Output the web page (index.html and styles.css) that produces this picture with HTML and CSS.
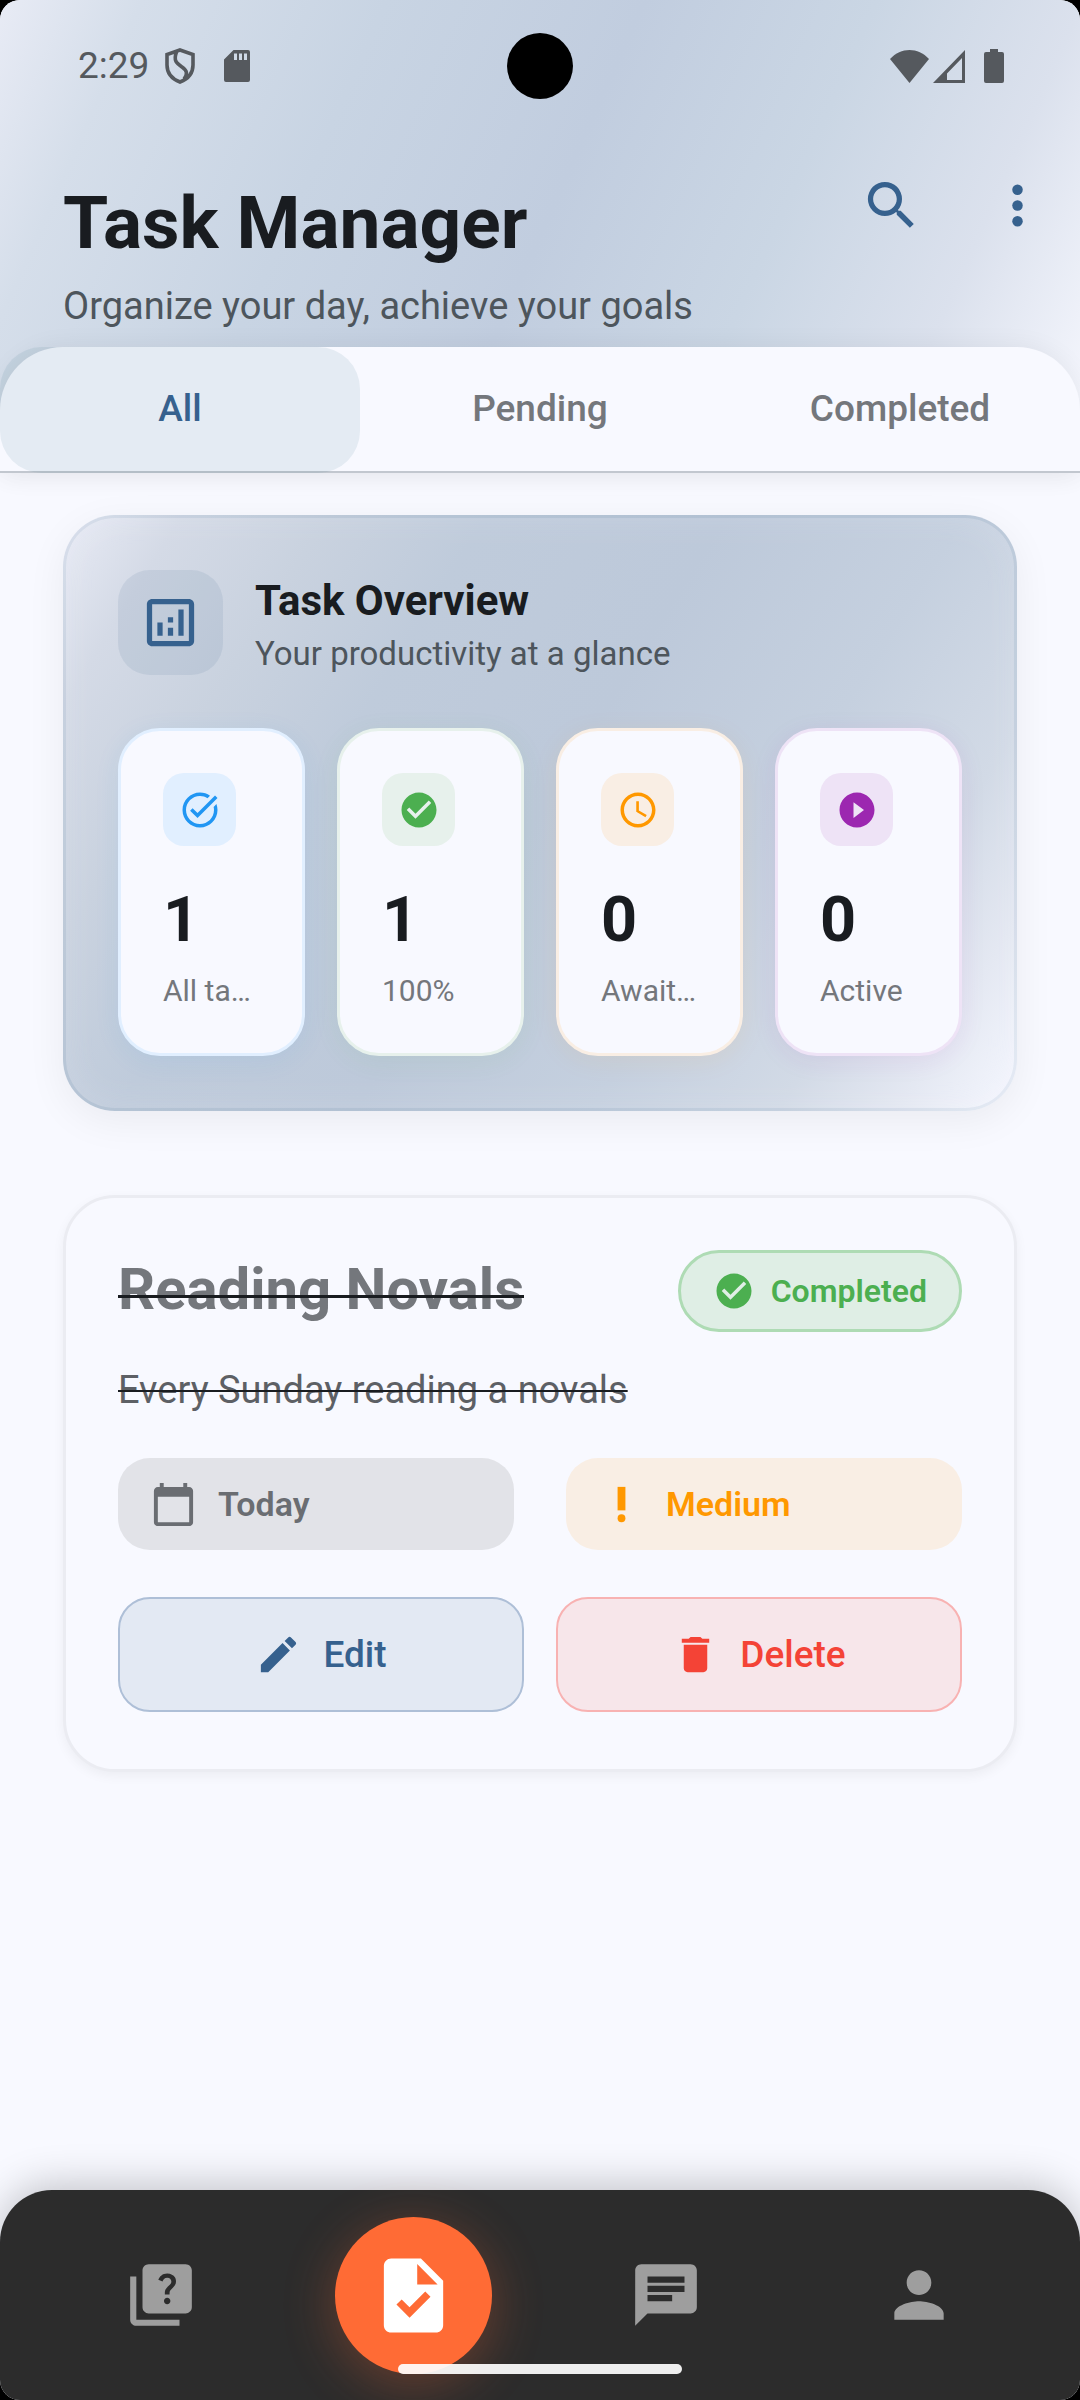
FILE: index.html
```html
<!DOCTYPE html>
<html lang="en">
<head>
<meta charset="utf-8">
<meta name="viewport" content="width=device-width, initial-scale=1">
<title>Task Manager</title>
<link rel="stylesheet" href="styles.css">
</head>
<body>
<div class="app">
  <header class="header">
    <div class="status">
      <div class="status-group">
        <span class="status-time">2:29</span>
        <svg class="status-icon shield" viewBox="0 0 30 36" aria-hidden="true"><path d="M15 2 28 6.500V17C28 25 23 31 15 34 7 31 2 25 2 17V6.500Z M11.500 4C8 13 12 15.500 17 19S23 26 19 31" fill="none" stroke="currentColor" stroke-width="3.600"/></svg>
        <svg class="status-icon sd" viewBox="0 0 26 32" aria-hidden="true"><path fill-rule="evenodd" d="M9.500 0H24a2 2 0 0 1 2 2V30a2 2 0 0 1-2 2H2a2 2 0 0 1-2-2V9.500ZM10 3.500V10h3V3.500ZM15 3.500V10h3V3.500ZM20 3.500V10h3V3.500Z"/></svg>
      </div>
      <span class="camera"></span>
      <div class="status-group">
        <svg class="status-icon wifi" viewBox="0 0 39 33" aria-hidden="true"><path d="M0 9C11-3 28-3 39 9L19.500 33Z"/></svg>
        <svg class="status-icon signal" viewBox="0 0 32 33" aria-hidden="true"><path fill-rule="evenodd" d="M32 0V33H0ZM29 8 14 23.500V30H29Z"/></svg>
        <svg class="status-icon battery" viewBox="0 0 20 34" aria-hidden="true"><path d="M6 0h8v3h4a2 2 0 0 1 2 2V32a2 2 0 0 1-2 2H2a2 2 0 0 1-2-2V5a2 2 0 0 1 2-2h4Z"/></svg>
      </div>
    </div>
    <div class="toolbar">
      <div class="heading">
        <h1 class="title">Task Manager</h1>
        <p class="subtitle">Organize your day, achieve your goals</p>
      </div>
      <div class="actions">
        <button class="icon-button" type="button" aria-label="Search"><svg class="icon-large" viewBox="0 0 24 24"><path d="M15.500 14h-.79l-.28-.27A6.471 6.471 0 0 0 16 9.500 6.500 6.500 0 1 0 9.500 16c1.610 0 3.090-.59 4.230-1.570l.27.28v.79l5 4.990L20.490 19l-4.990-5zm-6 0C7.010 14 5 11.990 5 9.500S7.010 5 9.500 5 14 7.010 14 9.500 11.990 14 9.500 14z"/></svg></button>
        <button class="icon-button" type="button" aria-label="More options"><svg class="icon-large" viewBox="0 0 24 24"><circle cx="12" cy="6" r="2"/><circle cx="12" cy="12" r="2"/><circle cx="12" cy="18" r="2"/></svg></button>
      </div>
    </div>
    <div class="tabs" role="tablist">
      <button class="tab tab-active" type="button" role="tab" aria-selected="true">All</button>
      <button class="tab" type="button" role="tab" aria-selected="false">Pending</button>
      <button class="tab" type="button" role="tab" aria-selected="false">Completed</button>
    </div>
  </header>

  <main class="content">
    <section class="overview">
      <div class="overview-head">
        <span class="overview-icon"><svg class="icon-large" viewBox="0 0 24 24" aria-hidden="true"><path d="M19 3H5c-1.100 0-2 .9-2 2v14c0 1.100.9 2 2 2h14c1.100 0 2-.9 2-2V5c0-1.100-.9-2-2-2zm0 16H5V5h14v14zM7 12h2v5H7zM15 7h2v10h-2zM11 14h2v3h-2zM11 10h2v2h-2z"/></svg></span>
        <div class="overview-text">
          <h2 class="overview-title">Task Overview</h2>
          <p class="overview-subtitle">Your productivity at a glance</p>
        </div>
      </div>
      <div class="stats">
        <div class="stat stat-blue">
          <span class="stat-icon"><svg class="icon-small" viewBox="0 0 24 24" aria-hidden="true"><path d="M22 5.180 10.590 16.600l-4.240-4.240 1.410-1.410 2.830 2.830 10-10L22 5.180zM19.790 10.220c.13.570.21 1.170.21 1.780 0 4.420-3.580 8-8 8s-8-3.580-8-8 3.580-8 8-8c1.580 0 3.040.46 4.280 1.250l1.440-1.440C16.100 2.670 14.130 2 12 2 6.480 2 2 6.480 2 12s4.480 10 10 10 10-4.480 10-10c0-1.190-.22-2.330-.6-3.390l-1.610 1.610z"/></svg></span>
          <strong class="stat-value">1</strong>
          <span class="stat-label">All ta…</span>
        </div>
        <div class="stat stat-green">
          <span class="stat-icon"><svg class="icon-small" viewBox="0 0 24 24" aria-hidden="true"><path d="M12 2C6.480 2 2 6.480 2 12s4.480 10 10 10 10-4.480 10-10S17.520 2 12 2zm-2 15-5-5 1.410-1.410L10 14.170l7.590-7.590L19 8l-9 9z"/></svg></span>
          <strong class="stat-value">1</strong>
          <span class="stat-label">100%</span>
        </div>
        <div class="stat stat-orange">
          <span class="stat-icon"><svg class="icon-small" viewBox="0 0 24 24" aria-hidden="true"><path d="M11.990 2C6.470 2 2 6.480 2 12s4.470 10 9.990 10C17.520 22 22 17.520 22 12S17.520 2 11.990 2zM12 20c-4.420 0-8-3.580-8-8s3.580-8 8-8 8 3.580 8 8-3.580 8-8 8zm.5-13H11v6l5.250 3.150.75-1.230-4.500-2.670z"/></svg></span>
          <strong class="stat-value">0</strong>
          <span class="stat-label">Await…</span>
        </div>
        <div class="stat stat-purple">
          <span class="stat-icon"><svg class="icon-small" viewBox="0 0 24 24" aria-hidden="true"><path d="M12 2C6.480 2 2 6.480 2 12s4.480 10 10 10 10-4.480 10-10S17.520 2 12 2zm-2 14.500v-9l6 4.500-6 4.500z"/></svg></span>
          <strong class="stat-value">0</strong>
          <span class="stat-label">Active</span>
        </div>
      </div>
    </section>

    <article class="task">
      <div class="task-head">
        <h2 class="task-title"><span class="struck">Reading Novals</span></h2>
        <span class="badge"><svg class="icon-small" viewBox="0 0 24 24" aria-hidden="true"><path d="M12 2C6.480 2 2 6.480 2 12s4.480 10 10 10 10-4.480 10-10S17.520 2 12 2zm-2 15-5-5 1.410-1.410L10 14.170l7.590-7.590L19 8l-9 9z"/></svg>Completed</span>
      </div>
      <p class="task-text">Every Sunday reading a novals</p>
      <div class="chips">
        <span class="chip chip-date"><svg class="icon-medium" viewBox="0 0 24 24" aria-hidden="true"><path d="M20 3h-1V1h-2v2H7V1H5v2H4c-1.100 0-2 .9-2 2v16c0 1.100.9 2 2 2h16c1.100 0 2-.9 2-2V5c0-1.100-.9-2-2-2zm0 18H4V8h16v13z"/></svg>Today</span>
        <span class="chip chip-priority"><svg class="icon-medium" viewBox="0 0 24 24" aria-hidden="true"><circle cx="12" cy="19" r="2"/><path d="M10 3h4v12h-4z"/></svg>Medium</span>
      </div>
      <div class="task-actions">
        <button class="button button-edit" type="button"><svg class="icon-medium" viewBox="0 0 24 24" aria-hidden="true"><path d="M3 17.250V21h3.750L17.810 9.940l-3.750-3.750L3 17.250zM20.710 7.040c.39-.39.39-1.020 0-1.410l-2.340-2.340c-.39-.39-1.020-.39-1.410 0l-1.830 1.830 3.750 3.750 1.830-1.830z"/></svg>Edit</button>
        <button class="button button-delete" type="button"><svg class="icon-medium" viewBox="0 0 24 24" aria-hidden="true"><path d="M6 19c0 1.100.9 2 2 2h8c1.100 0 2-.9 2-2V7H6v12zM19 4h-3.500l-1-1h-5l-1 1H5v2h14V4z"/></svg>Delete</button>
      </div>
    </article>
  </main>

  <nav class="nav">
    <a class="nav-item" href="#quiz" aria-label="Quiz"><svg class="nav-icon" viewBox="0 0 24 24"><path d="M4 6H2v14c0 1.100.9 2 2 2h14v-2H4V6zm16-4H8c-1.100 0-2 .9-2 2v12c0 1.100.9 2 2 2h12c1.100 0 2-.9 2-2V4c0-1.100-.9-2-2-2zm-5.990 13c-.59 0-1.050-.47-1.050-1.050 0-.59.470-1.040 1.050-1.040.59 0 1.040.45 1.040 1.040-.01.580-.45 1.050-1.040 1.050zm2.500-6.170c-.63.930-1.230 1.210-1.560 1.810-.13.240-.18.400-.18 1.180h-1.520c0-.41-.06-1.080.26-1.650.41-.73 1.180-1.160 1.630-1.800.48-.68.210-1.940-1.140-1.940-.88 0-1.320.67-1.500 1.230l-1.370-.57C11.510 5.960 12.520 5 13.990 5c1.230 0 2.080.56 2.510 1.260.37.600.58 1.730.01 2.570z"/></svg></a>
    <a class="nav-item" href="#tasks" aria-label="Tasks" aria-current="page"><span class="nav-active"><svg class="nav-icon-active" viewBox="0 0 24 24"><path d="M14 2H6c-1.100 0-1.990.9-1.990 2L4 20c0 1.100.89 2 1.990 2H18c1.100 0 2-.9 2-2V8l-6-6zm-3.060 16L7.400 14.460l1.410-1.410 2.120 2.120 4.240-4.240 1.410 1.410L10.940 18zM13 9V3.500L18.500 9H13z"/></svg></span></a>
    <a class="nav-item" href="#chat" aria-label="Chat"><svg class="nav-icon" viewBox="0 0 24 24"><path d="M20 2H4c-1.100 0-1.990.9-1.990 2L2 22l4-4h14c1.100 0 2-.9 2-2V4c0-1.100-.9-2-2-2zM6 9h12v2H6V9zm8 5H6v-2h8v2zm4-6H6V6h12v2z"/></svg></a>
    <a class="nav-item" href="#profile" aria-label="Profile"><svg class="nav-icon" viewBox="0 0 24 24"><path d="M12 12c2.210 0 4-1.790 4-4s-1.790-4-4-4-4 1.790-4 4 1.790 4 4 4zm0 2c-2.670 0-8 1.340-8 4v2h16v-2c0-2.660-5.330-4-8-4z"/></svg></a>
    <span class="home-bar"></span>
  </nav>
</div>
</body>
</html>
```
FILE: styles.css
```css
* {
  box-sizing: border-box;
}

body {
  margin: 0;
  background: #000;
  color: #191c20;
  font-family: Roboto, "Liberation Sans", sans-serif;
}

h1,
h2,
p {
  margin: 0;
}

button {
  border: 0;
  padding: 0;
  background: none;
  font-family: inherit;
}

svg {
  display: block;
  flex: none;
  fill: currentColor;
}

.app {
  display: flex;
  flex-direction: column;
  min-height: 100vh;
  overflow: hidden;
  border-radius: 20px;
  background: #f8f9ff;
}

/* Header */
.header {
  background: linear-gradient(114deg, #e8ebf5 0%, #d5deea 11%, #c8d4e3 30%, #c1cddf 50%, #cad6e4 68%, #dbe1ed 84%, #f8f9ff 100%);
  box-shadow: 0 5px 26px rgba(0, 0, 0, 0.04);
}

.status {
  display: grid;
  grid-template-columns: 1fr auto 1fr;
  align-items: center;
  height: 132px;
  padding: 0 76px 0 76px;
  color: #55595e;
}

.status-group {
  display: flex;
  align-items: center;
}

.status-group:first-child {
  padding-left: 2px;
}

.status-group:last-child {
  justify-content: flex-end;
}

.status-time {
  font-size: 37px;
  line-height: 44px;
}

.shield {
  width: 30px;
  height: 36px;
  margin-left: 16px;
}

.sd {
  width: 26px;
  height: 32px;
  margin-left: 29px;
}

.wifi {
  width: 39px;
  height: 33px;
}

.signal {
  width: 32px;
  height: 33px;
  margin-left: 4px;
}

.battery {
  width: 20px;
  height: 34px;
  margin-left: 19px;
}

.camera {
  width: 66px;
  height: 66px;
  border-radius: 50%;
  background: #000;
}

.toolbar {
  display: flex;
  align-items: flex-start;
  justify-content: space-between;
  padding-bottom: 18px;
  padding-left: 63px;
}

.heading {
  padding-top: 47px;
}

.title {
  font-size: 73px;
  font-weight: 700;
  line-height: 88px;
}

.subtitle {
  margin-top: 16px;
  color: #4d555c;
  font-size: 38px;
  line-height: 46px;
}

.actions {
  display: flex;
  padding-top: 10px;
}

.icon-button {
  display: grid;
  place-items: center;
  width: 126px;
  height: 126px;
  color: #36618e;
}

.icon-large {
  width: 63px;
  height: 63px;
}

.icon-medium {
  width: 47px;
  height: 47px;
}

.icon-small {
  width: 42px;
  height: 42px;
}

.tabs {
  display: grid;
  grid-template-columns: repeat(3, 1fr);
  height: 126px;
  border-radius: 63px 63px 0 0;
  background: linear-gradient(#c2c7cf, #c2c7cf) bottom / 100% 2px no-repeat #f8f9ff;
  box-shadow: 0 0 26px rgba(0, 0, 0, 0.06);
}

.tab {
  padding-bottom: 4px;
  border-radius: 42px;
  color: #74777c;
  font-size: 37px;
  font-weight: 500;
}

.tab-active {
  background: rgba(54, 113, 142, 0.1);
  color: #36618e;
}

/* Content */
.content {
  display: flex;
  flex: 1;
  flex-direction: column;
  gap: 84px;
  padding: 42px 63px;
}

.overview {
  padding: 52px;
  border: 3px solid rgba(54, 97, 142, 0.08);
  border-radius: 52px;
  background: linear-gradient(122deg, #e8ebf5 0%, #d4dae6 9%, #c9d2df 20%, #bfcbdb 32%, #bdc9da 50%, #c5d0df 68%, #d2dae6 82%, #e4e8f2 91%, #f6f8ff 100%) border-box;
  box-shadow: 0 10px 40px rgba(0, 0, 0, 0.06), inset 0 0 40px rgba(248, 249, 255, 0.15);
}

.overview-head {
  display: flex;
  gap: 32px;
}

.overview-icon {
  display: grid;
  place-items: center;
  width: 105px;
  height: 105px;
  border-radius: 32px;
  background: rgba(54, 97, 142, 0.1);
  color: #36618e;
}

.overview-text {
  padding-top: 6px;
}

.overview-title {
  font-size: 42px;
  font-weight: 700;
  line-height: 50px;
}

.overview-subtitle {
  margin-top: 9px;
  color: #4d555c;
  font-size: 33px;
  line-height: 38px;
}

.stats {
  display: grid;
  grid-template-columns: repeat(4, 1fr);
  gap: 32px;
  margin-top: 53px;
}

.stat {
  display: flex;
  flex-direction: column;
  padding: 42px 42px 44px;
  border: 3px solid;
  border-radius: 42px;
  background: #f8f9ff;
}

.stat-icon {
  display: grid;
  place-items: center;
  width: 73px;
  height: 73px;
  border-radius: 21px;
}

.stat-value {
  margin-top: 36px;
  font-size: 63px;
  font-weight: 700;
  line-height: 76px;
}

.stat-label {
  margin-top: 15px;
  color: #74777c;
  font-size: 30px;
  line-height: 36px;
  white-space: nowrap;
}

.stat-blue {
  border-color: #e1efff;
  box-shadow: 0 5px 26px rgba(33, 150, 243, 0.08);
}

.stat-blue .stat-icon {
  background: #e1efff;
  color: #2196f3;
}

.stat-green {
  border-color: #e7f1ec;
  box-shadow: 0 5px 26px rgba(76, 175, 80, 0.08);
}

.stat-green .stat-icon {
  background: #e7f1ec;
  color: #4caf50;
}

.stat-orange {
  border-color: #f9eee4;
  box-shadow: 0 5px 26px rgba(255, 152, 0, 0.08);
}

.stat-orange .stat-icon {
  background: #f9eee4;
  color: #ff9800;
}

.stat-purple {
  border-color: #eee3f6;
  box-shadow: 0 5px 26px rgba(156, 39, 176, 0.08);
}

.stat-purple .stat-icon {
  background: #eee3f6;
  color: #9c27b0;
}

/* Task card */
.task {
  padding: 52px;
  border: 3px solid #ebecf2;
  border-radius: 52px;
  background: #f8f9ff;
  box-shadow: 0 4px 12px rgba(0, 0, 0, 0.05);
}

.task-head {
  display: flex;
  align-items: flex-start;
  justify-content: space-between;
}

.task-title {
  color: #74777c;
  font-size: 58px;
  font-weight: 700;
  line-height: 78px;
}

.struck {
  display: block;
  position: relative;
}

/* Thin rule drawn over the title of a finished task */
.struck::after {
  content: "";
  position: absolute;
  top: 45px;
  right: 0;
  left: 0;
  height: 3px;
  background: #191c20;
}

.badge {
  display: flex;
  align-items: center;
  gap: 16px;
  height: 82px;
  padding: 0 32px;
  border: 3px solid #aedbb4;
  border-radius: 41px;
  background: #dfeee5;
  color: #4caf50;
  font-size: 32px;
  font-weight: 600;
}

.task-text {
  margin-top: 34px;
  color: #5d6065;
  font-size: 38px;
  line-height: 48px;
  text-decoration: line-through #191c20 2px;
}

.chips {
  display: grid;
  grid-template-columns: repeat(2, 1fr);
  gap: 52px;
  margin-top: 44px;
}

.chip {
  display: flex;
  align-items: center;
  gap: 21px;
  height: 92px;
  padding: 0 32px;
  border-radius: 32px;
  font-size: 34px;
  font-weight: 600;
}

.chip-date {
  background: #e2e3e8;
  color: #6a6d72;
}

.chip-priority {
  background: #f9eee4;
  color: #ff9800;
}

.task-actions {
  display: grid;
  grid-template-columns: repeat(2, 1fr);
  gap: 32px;
  margin: 47px 0 5px;
}

.button {
  display: flex;
  align-items: center;
  justify-content: center;
  gap: 21px;
  height: 115px;
  border: 2px solid;
  border-radius: 32px;
  font-size: 37px;
  font-weight: 500;
}

.button-edit {
  border-color: #aebfd7;
  background: #e3e9f3;
  color: #36618e;
}

.button-delete {
  border-color: #f8b2b2;
  background: #f7e6ea;
  color: #f44336;
}

/* Bottom navigation */
.nav {
  position: relative;
  display: grid;
  grid-template-columns: repeat(4, 1fr);
  height: 210px;
  padding: 0 35px;
  border-radius: 52px 52px 0 0;
  background: #2c2c2c;
  box-shadow: 0 -5px 40px rgba(0, 0, 0, 0.22);
}

.nav-item {
  display: grid;
  place-items: center;
  color: #9e9e9e;
}

.nav-icon {
  width: 74px;
  height: 74px;
}

.nav-active {
  display: grid;
  place-items: center;
  width: 157px;
  height: 157px;
  border-radius: 50%;
  background: #ff6b35;
  box-shadow: 0 10px 52px rgba(255, 107, 53, 0.3);
  color: #fff;
}

.nav-icon-active {
  width: 89px;
  height: 89px;
}

.home-bar {
  position: absolute;
  bottom: 26px;
  left: 50%;
  width: 284px;
  height: 10px;
  border-radius: 5px;
  background: rgba(255, 255, 255, 0.92);
  transform: translateX(-50%);
}
```
